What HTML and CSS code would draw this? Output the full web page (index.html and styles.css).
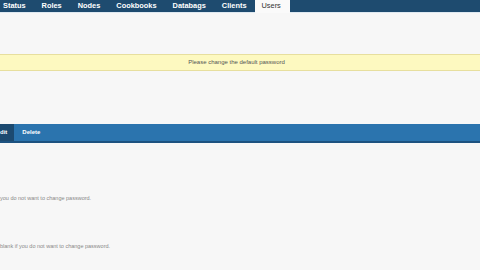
FILE: index.html
```html
<!DOCTYPE html>
<html>
<head>
    <title>Users</title>
    <link rel="stylesheet" href="styles.css">
</head>
<body>
    <div class="topnav">
        <a class="tab">Status</a>
        <a class="tab">Roles</a>
        <a class="tab">Nodes</a>
        <a class="tab">Cookbooks</a>
        <a class="tab">Databags</a>
        <a class="tab">Clients</a>
        <a class="tab active">Users</a>
    </div>

    <div class="notice">Please change the default password</div>

    <div class="subnav">
        <a class="subtab current">dit</a>
        <a class="subtab">Delete</a>
    </div>

    <div class="form">
        <p class="hint first">you do not want to change password.</p>
        <p class="hint second">blank if you do not want to change password.</p>
    </div>
</body>
</html>
```

FILE: styles.css
```css
body { margin: 0; background-color: #f7f7f7; font-family: "Liberation Sans", Arial, sans-serif; }
.topnav { display: flex; height: 12px; background-color: #1e4b6f; border-bottom: 1px solid #dfe9f1; margin-left: -5px; }
.tab { color: #fff; font-weight: bold; font-size: 7.4px; line-height: 12px; padding: 0 8px; }
.tab.active { background-color: #fafafa; color: #333; font-weight: normal; height: 13px; margin-bottom: -1px; padding: 0 9px 0 7px; }
.notice { margin-top: 41px; padding-right: 7px; height: 15px; line-height: 15px; background-color: #fdf9c0; border-top: 1px solid #e7df9e; border-bottom: 1px solid #e7df9e; text-align: center; font-size: 6px; color: #555; }
.subnav { display: flex; margin-top: 53px; height: 17px; background-color: #2b74ae; border-bottom: 2px solid #1d5280; }
.subtab { color: #fff; font-weight: bold; font-size: 6px; line-height: 17px; padding: 0 7px; }
.subtab.current { background-color: #1c4a70; margin-left: -7px; margin-right: 1px; }
.hint { margin: 0; font-size: 5.5px; color: #888; line-height: 8px; }
.hint.first { margin-top: 51px; }
.hint.second { margin-top: 40px; }
```
